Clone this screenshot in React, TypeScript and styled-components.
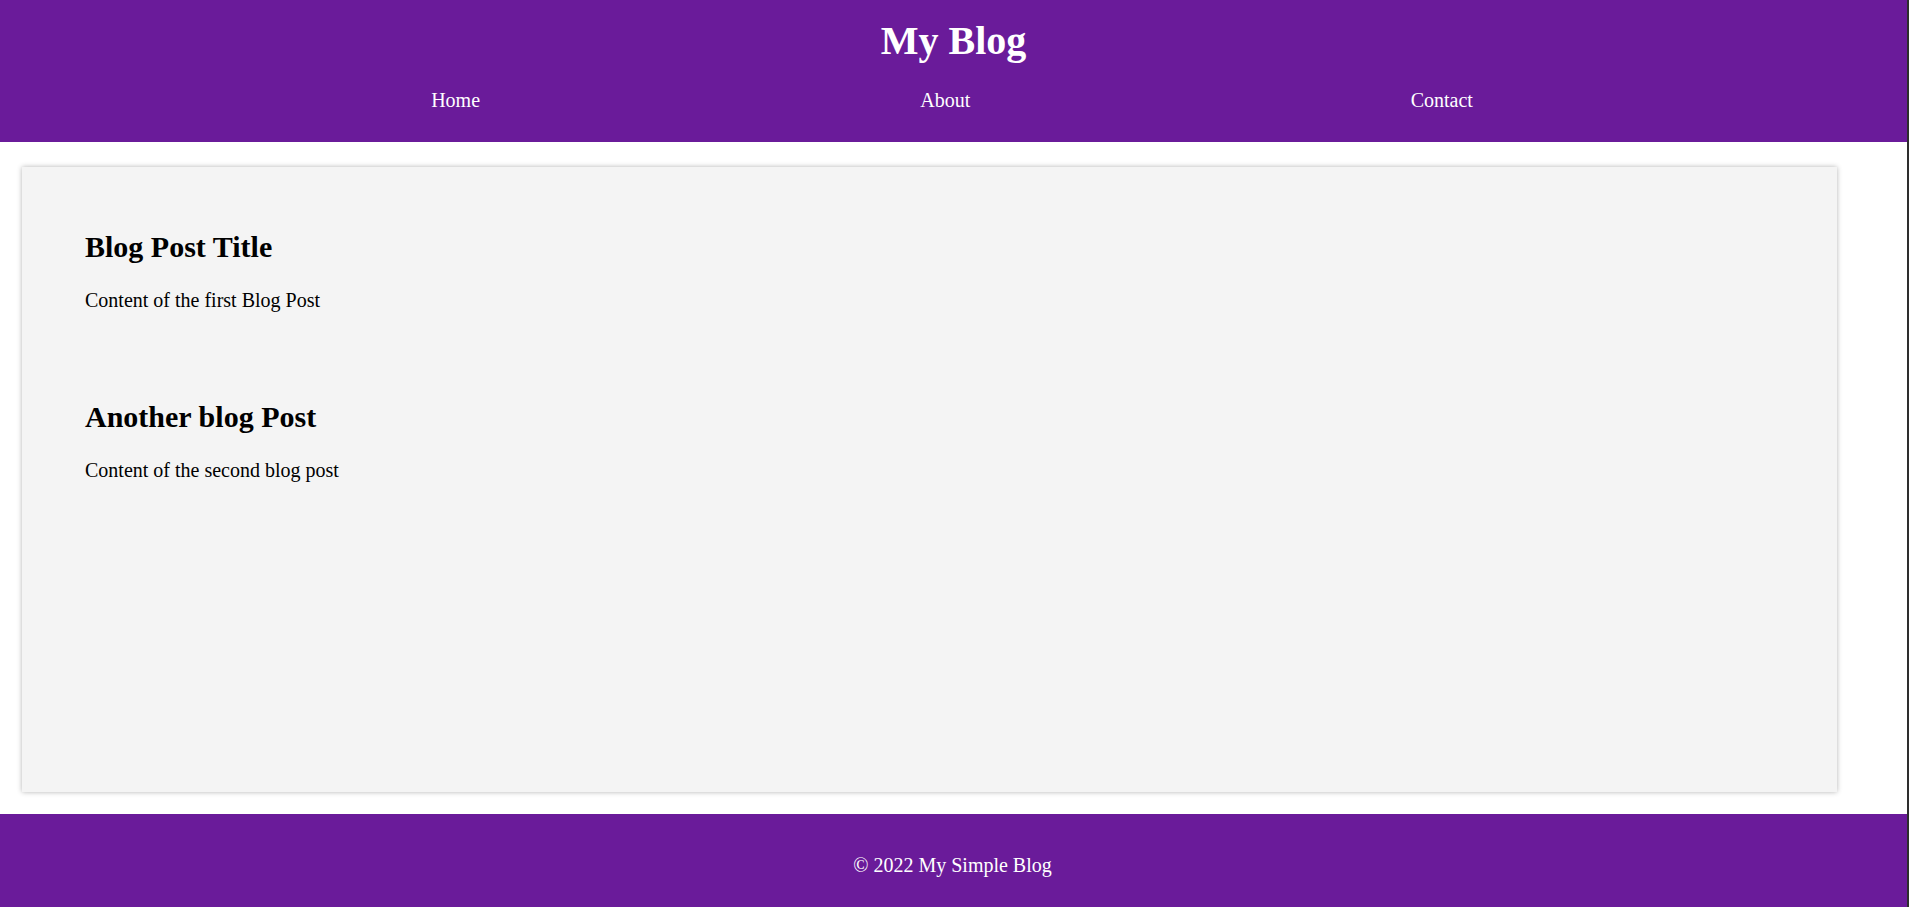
import React from "react";
import styled, { createGlobalStyle } from "styled-components";

const GlobalStyle = createGlobalStyle`
  html, body {
    margin: 0;
    padding: 0;
    background: #ffffff;
  }
  body {
    box-sizing: border-box;
    border-right: 2px solid #2e2e2e;
    font-family: "Liberation Serif", "Times New Roman", serif;
    font-size: 20px;
    color: #000;
    height: 907px;
    overflow: hidden;
  }
`;

const Page = styled.div`
  display: flex;
  flex-direction: column;
`;

const Header = styled.header`
  background: #6a1b9a;
  color: #fff;
  padding: 18px 0 30px;
  text-align: center;
`;

const SiteTitle = styled.h1`
  margin: 0;
  font-size: 40px;
  line-height: 46px;
  font-weight: bold;
`;

const NavList = styled.ul`
  list-style: none;
  margin: 25px 0 0;
  padding: 0 214px 0 211px;
  display: flex;
  justify-content: space-around;
`;

const NavItem = styled.li`
  font-size: 20px;
  line-height: 23px;
`;

const NavLink = styled.a`
  color: #fff;
  text-decoration: none;
`;

const Main = styled.main`
  padding: 25px 70px 22px 22px;
`;

const Card = styled.section`
  box-sizing: border-box;
  height: 625px;
  background: #f4f4f4;
  box-shadow: 0 0 5px rgba(0, 0, 0, 0.3);
  padding: 63px 63px;
  display: flex;
  flex-direction: column;
  gap: 88px;
`;

const Post = styled.article`
  display: flex;
  flex-direction: column;
  gap: 25px;
`;

const PostTitle = styled.h2`
  margin: 0;
  font-size: 30px;
  line-height: 34px;
  font-weight: bold;
`;

const PostBody = styled.p`
  margin: 0;
  font-size: 20px;
  line-height: 23px;
`;

const Footer = styled.footer`
  background: #6a1b9a;
  color: #fff;
  text-align: center;
  padding: 40px 2px 30px 0;
  font-size: 20px;
  line-height: 23px;
`;

export default function App() {
  const posts = [
    { title: "Blog Post Title", body: "Content of the first Blog Post" },
    { title: "Another blog Post", body: "Content of the second blog post" },
  ];
  return (
    <>
      <GlobalStyle />
      <Page>
        <Header>
          <SiteTitle>My Blog</SiteTitle>
          <nav>
            <NavList>
              <NavItem><NavLink href="#">Home</NavLink></NavItem>
              <NavItem><NavLink href="#">About</NavLink></NavItem>
              <NavItem><NavLink href="#">Contact</NavLink></NavItem>
            </NavList>
          </nav>
        </Header>
        <Main>
          <Card>
            {posts.map((p) => (
              <Post key={p.title}>
                <PostTitle>{p.title}</PostTitle>
                <PostBody>{p.body}</PostBody>
              </Post>
            ))}
          </Card>
        </Main>
        <Footer>© 2022 My Simple Blog</Footer>
      </Page>
    </>
  );
}
